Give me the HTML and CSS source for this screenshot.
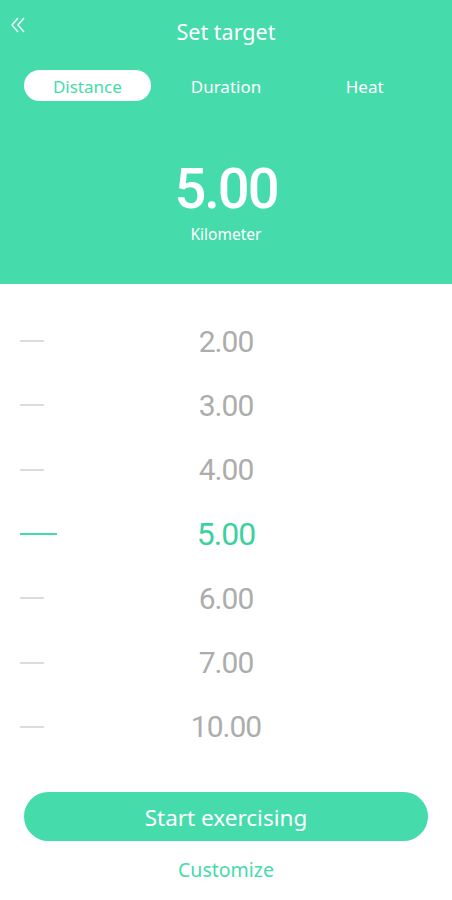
FILE: index.html
```html
<!DOCTYPE html>
<html>

<head>
  <title>Set target</title>
  <link rel="stylesheet" href="styles.css">
</head>

<body>

  <div class="header">
    <div class="topbar">
      <span class="back">
        <svg width="14" height="16" viewBox="0 0 14 16">
          <path d="M7 1 L1 8 L7 15 M13 1 L7 8 L13 15" fill="none" stroke="#e8fbf4" stroke-width="1.6" />
        </svg>
      </span>
      <h1>Set target</h1>
    </div>

    <div class="tabs">
      <div class="tab active">Distance</div>
      <div class="tab">Duration</div>
      <div class="tab">Heat</div>
    </div>

    <div class="target">
      <div class="big">5.00</div>
      <div class="unit">Kilometer</div>
    </div>
  </div>

  <ul class="picker">
    <li><span class="dash"></span><span class="num">2.00</span></li>
    <li><span class="dash"></span><span class="num">3.00</span></li>
    <li><span class="dash"></span><span class="num">4.00</span></li>
    <li class="selected"><span class="dash"></span><span class="num">5.00</span></li>
    <li><span class="dash"></span><span class="num">6.00</span></li>
    <li><span class="dash"></span><span class="num">7.00</span></li>
    <li><span class="dash"></span><span class="num">10.00</span></li>
  </ul>

  <div class="actions">
    <button class="start">Start exercising</button>
    <a class="custom">Customize</a>
  </div>

</body>

</html>
```

FILE: styles.css
```css
body {
  margin: 0;
  background: white;
  font-family: "Noto Sans", "Open Sans", sans-serif;
}

.header {
  background-color: #46dbab;
  color: white;
  height: 284px;
  box-sizing: border-box;
  padding-top: 14px;
}

.topbar {
  position: relative;
  height: 34px;
  display: flex;
  align-items: center;
  justify-content: center;
}

.back {
  position: absolute;
  left: 11px;
  top: 2px;
}

h1 {
  margin: 0;
  font-size: 21.5px;
  font-weight: 400;
}

.tabs {
  display: grid;
  grid-template-columns: 1fr 1fr 1fr;
  padding: 0 18px;
  margin-top: 22px;
}

.tab {
  margin: 0 6px;
  height: 31px;
  line-height: 33px;
  text-align: center;
  font-size: 17px;
  border-radius: 16px;
}

.tab.active {
  background: white;
  color: #46dbab;
}

.target {
  text-align: center;
  margin-top: 60px;
}

.big {
  font-family: Roboto, sans-serif;
  font-size: 56px;
  font-weight: 500;
  letter-spacing: -2px;
  line-height: 56px;
}

.unit {
  font-size: 15.5px;
  margin-top: 6px;
}

.picker {
  list-style: none;
  margin: 0;
  padding: 25px 0 0;
}

.picker li {
  position: relative;
  height: 64.3px;
  display: flex;
  align-items: center;
  justify-content: center;
}

.dash {
  position: absolute;
  left: 20px;
  top: 50%;
  width: 24px;
  height: 2px;
  margin-top: -1px;
  background: #dcdcdc;
}

.num {
  font-family: Roboto, sans-serif;
  font-size: 30px;
  letter-spacing: -1px;
  color: #adadad;
}

.selected .dash {
  width: 37px;
  background: #46dbab;
}

.selected .num {
  color: #3dd19f;
  font-size: 32px;
}

.actions {
  display: flex;
  flex-direction: column;
  align-items: center;
  padding: 33px 24px 0;
}

.start {
  width: 100%;
  height: 49px;
  border: none;
  border-radius: 25px;
  background-color: #46dbab;
  color: white;
  font-family: "Noto Sans", "Open Sans", sans-serif;
  font-size: 22.5px;
  padding-top: 2px;
}

.custom {
  margin-top: 15px;
  color: #46dbab;
  font-size: 19.5px;
}
```
